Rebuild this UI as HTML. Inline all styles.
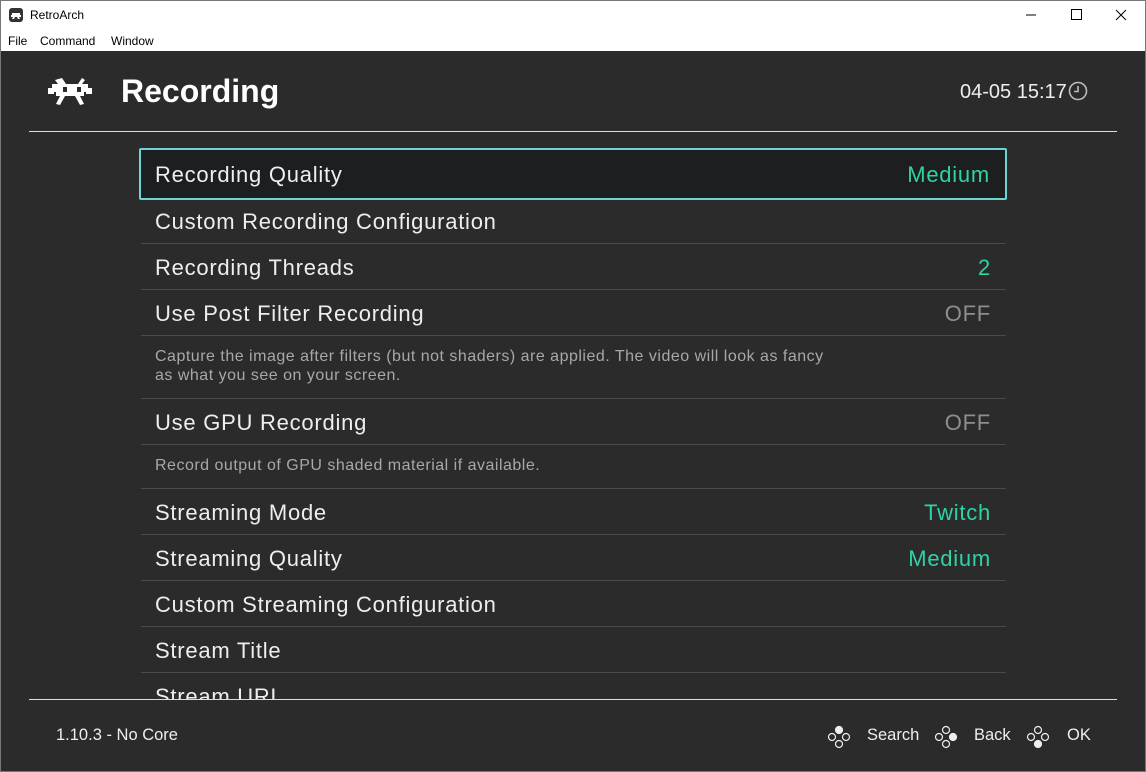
<!DOCTYPE html>
<html><head><style>
*{margin:0;padding:0;box-sizing:border-box}
body{width:1146px;height:772px;overflow:hidden;font-family:"Liberation Sans",sans-serif;background:#fff;position:relative}
.tb{position:absolute;left:0;top:0;width:1146px;height:30px;background:#fff;font-size:12px;color:#000}
.menu{position:absolute;top:30px;left:0;width:1146px;height:21px;font-size:12px}
.menu span{position:absolute;top:4px}
.main{position:absolute;left:1px;top:51px;width:1144px;height:720px;background:#2b2b2b;color:#eee;overflow:hidden}
.abs{position:absolute}
.row{position:absolute;left:140px;width:865px;height:46px;border-bottom:1px solid #4a4a4a;font-size:22px;letter-spacing:0.75px}
.row .l{position:absolute;left:14px;top:11px}
.row .v{position:absolute;right:15px;top:11px;color:#2ed3a5}
.row .v.off{color:#8e8e8e}
.desc{position:absolute;left:140px;width:865px;border-bottom:1px solid #4a4a4a;font-size:16px;letter-spacing:0.5px;color:#a8a8a8;padding-left:14px;line-height:19px}
</style></head><body>
<div class="tb">
<svg class="abs" style="left:9px;top:8px" width="14" height="14" viewBox="0 0 14 14"><rect width="14" height="14" rx="3" fill="#333"/><path d="M3 5h8v2h1v2h-2l1 2h-2l-1-2H6l-1 2H3l1-2H2V7h1z" fill="#fff"/></svg>
<span class="abs" style="left:30px;top:8px">RetroArch</span>
<svg class="abs" style="left:1020px;top:8px" width="110" height="14"><path d="M6 7h10" stroke="#000"/><rect x="51.5" y="1.5" width="10" height="10" fill="none" stroke="#000"/><path d="M96 2l10 10M106 2l-10 10" stroke="#000"/></svg>
</div>
<div class="menu"><span style="left:8px">File</span><span style="left:40px">Command</span><span style="left:111px">Window</span></div>
<div class="main">
<svg class="abs" style="left:47px;top:25px" width="48" height="30" viewBox="0 0 48 30"><path d="M14 2l4 6h12l4-6 3 2-3 4h6v4h4v6h-6v-2h-2v4h-4l4 8-4 1-5-9H17l-5 9-4-1 4-8H8v-4H6v2H0v-6h4V8h6L7 4z" fill="#fff"/><rect x="15" y="11" width="4" height="5" fill="#2b2b2b"/><rect x="29" y="11" width="4" height="5" fill="#2b2b2b"/></svg>
<div class="abs" style="left:120px;top:22px;font-size:32px;font-weight:bold;color:#fff">Recording</div>
<div class="abs" style="left:959px;top:30px;font-size:20px;color:#eee">04-05 15:17</div>
<svg class="abs" style="left:1067px;top:30px" width="20" height="20"><circle cx="10" cy="10" r="8.5" fill="none" stroke="#bbb" stroke-width="1.6"/><path d="M10 5v5.5h-4" fill="none" stroke="#bbb" stroke-width="1.6"/></svg>
<div class="abs" style="left:28px;top:80px;width:1088px;height:1px;background:#ddd"></div>

<div class="row" style="top:97px;left:138px;width:868px;height:52px;background:#1d1e20;border:2px solid #6dd4d4;border-radius:2px"><span class="l" style="top:12px;left:14px">Recording Quality</span><span class="v" style="top:12px;right:15px">Medium</span></div>
<div class="row" style="top:147px"><span class="l">Custom Recording Configuration</span></div>
<div class="row" style="top:193px"><span class="l">Recording Threads</span><span class="v">2</span></div>
<div class="row" style="top:239px"><span class="l">Use Post Filter Recording</span><span class="v off">OFF</span></div>
<div class="desc" style="top:285px;height:63px;padding-top:11px">Capture the image after filters (but not shaders) are applied. The video will look as fancy<br>as what you see on your screen.</div>
<div class="row" style="top:348px"><span class="l">Use GPU Recording</span><span class="v off">OFF</span></div>
<div class="desc" style="top:394px;height:44px;padding-top:11px">Record output of GPU shaded material if available.</div>
<div class="row" style="top:438px"><span class="l">Streaming Mode</span><span class="v">Twitch</span></div>
<div class="row" style="top:484px"><span class="l">Streaming Quality</span><span class="v">Medium</span></div>
<div class="row" style="top:530px"><span class="l">Custom Streaming Configuration</span></div>
<div class="row" style="top:576px"><span class="l">Stream Title</span></div>
<div class="row" style="top:622px"><span class="l">Stream URL</span></div>
<div class="abs" style="left:0;top:649px;width:1144px;height:80px;background:#2b2b2b"></div>
<div class="abs" style="left:28px;top:648px;width:1088px;height:1px;background:#ddd"></div>
<div class="abs" style="left:55px;top:675px;font-size:16.5px;color:#eee">1.10.3 - No Core</div>
<svg class="abs" style="left:826px;top:674px" width="24" height="24"><g fill="none" stroke="#eee" stroke-width="1.2"><circle cx="12" cy="5" r="3.5" fill="#eee"/><circle cx="5" cy="12" r="3.5"/><circle cx="19" cy="12" r="3.5"/><circle cx="12" cy="19" r="3.5"/></g></svg>
<div class="abs" style="left:866px;top:675px;font-size:16.5px;color:#eee">Search</div>
<svg class="abs" style="left:933px;top:674px" width="24" height="24"><g fill="none" stroke="#eee" stroke-width="1.2"><circle cx="12" cy="5" r="3.5"/><circle cx="5" cy="12" r="3.5"/><circle cx="19" cy="12" r="3.5" fill="#eee"/><circle cx="12" cy="19" r="3.5"/></g></svg>
<div class="abs" style="left:973px;top:675px;font-size:16.5px;color:#eee">Back</div>
<svg class="abs" style="left:1025px;top:674px" width="24" height="24"><g fill="none" stroke="#eee" stroke-width="1.2"><circle cx="12" cy="5" r="3.5"/><circle cx="5" cy="12" r="3.5"/><circle cx="19" cy="12" r="3.5"/><circle cx="12" cy="19" r="3.5" fill="#eee"/></g></svg>
<div class="abs" style="left:1066px;top:675px;font-size:16.5px;color:#eee">OK</div>
</div>
<div class="abs" style="left:0;top:0;width:1146px;height:772px;border:1px solid #777;pointer-events:none"></div>
</body></html>
